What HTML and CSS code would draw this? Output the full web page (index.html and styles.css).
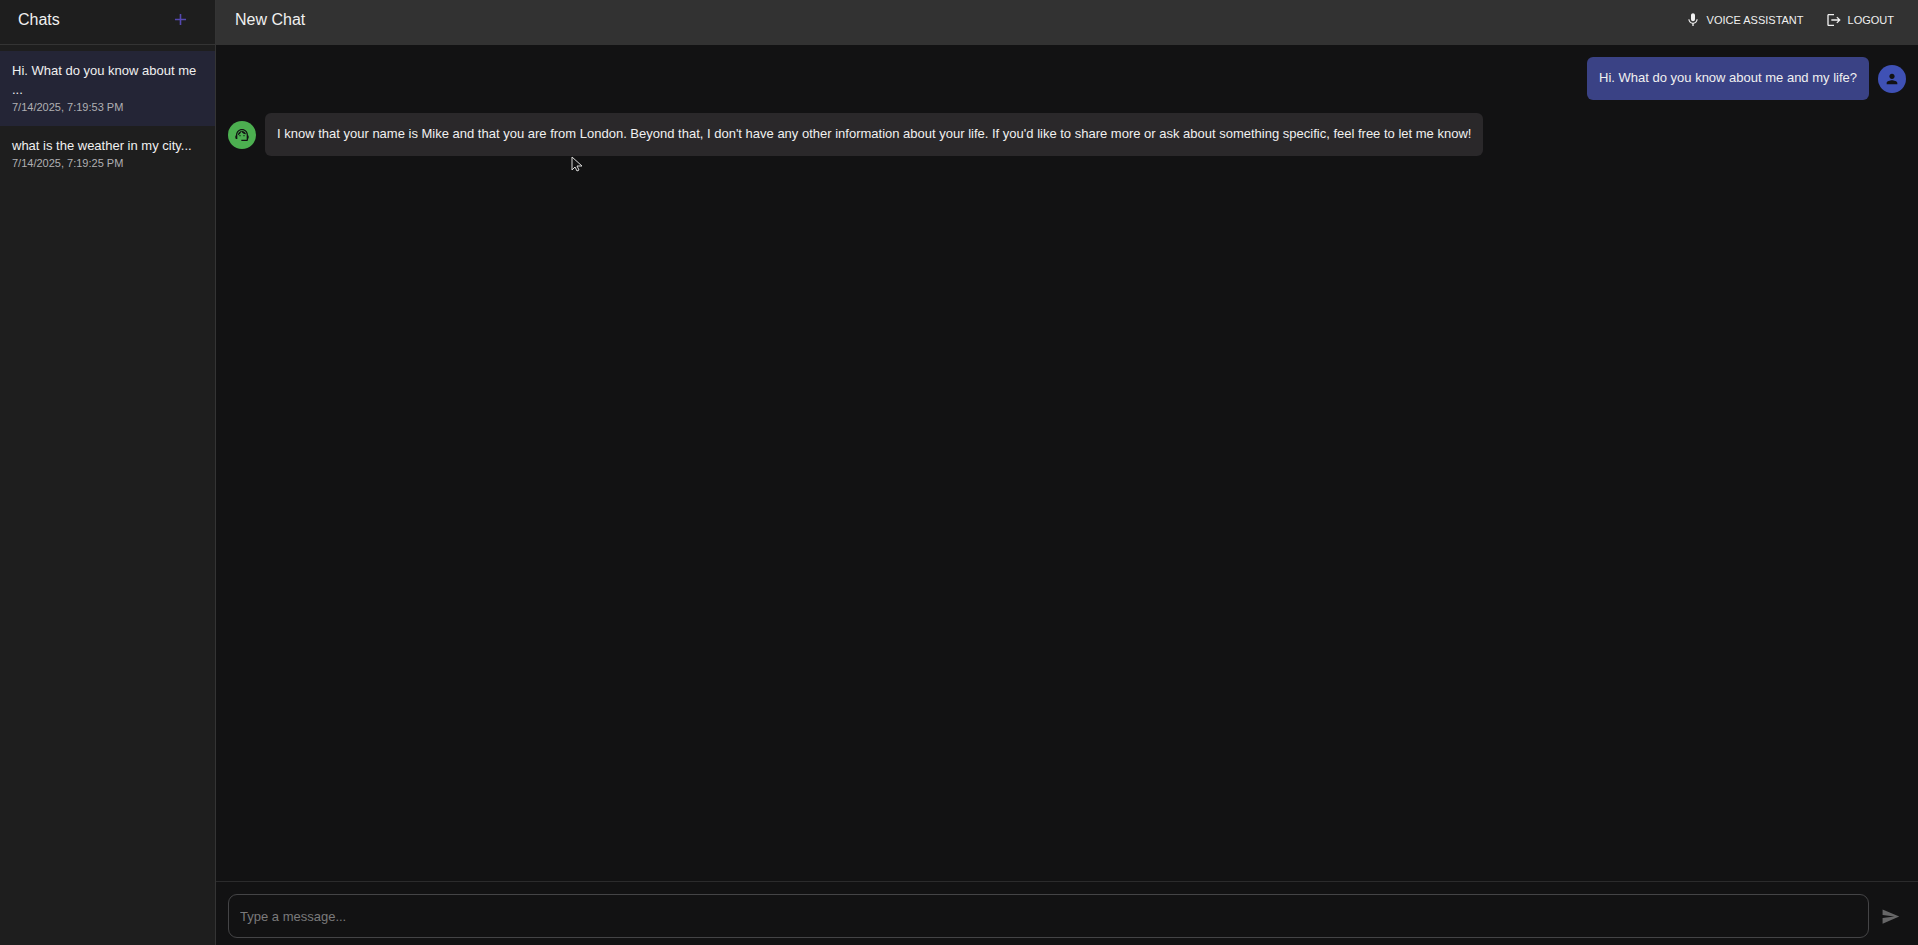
FILE: index.html
```html
<!DOCTYPE html>
<html lang="en">
    <head>
        <meta charset="utf-8" />
        <meta name="viewport" content="width=device-width, initial-scale=1">
        <title>New Chat</title>
        <link rel="stylesheet" href="styles.css">
    </head>
    <body>
        <div class="app">
            <aside class="sidebar">
                <div class="sidebar-header">
                    <h2>Chats</h2>
                    <button type="button" class="add-btn" aria-label="New chat">
                        <svg class="icon-lg" viewBox="0 0 24 24"><path d="M19 13h-6v6h-2v-6H5v-2h6V5h2v6h6z"/></svg>
                    </button>
                </div>
                <ul class="chat-list">
                    <li>
                        <a href="#" class="chat-item active">
                            <span class="chat-title">Hi. What do you know about me ...</span>
                            <span class="chat-date">7/14/2025, 7:19:53 PM</span>
                        </a>
                    </li>
                    <li>
                        <a href="#" class="chat-item">
                            <span class="chat-title">what is the weather in my city...</span>
                            <span class="chat-date">7/14/2025, 7:19:25 PM</span>
                        </a>
                    </li>
                </ul>
            </aside>
            <main class="main">
                <header class="topbar">
                    <h1>New Chat</h1>
                    <button type="button" class="top-btn">
                        <svg class="icon" viewBox="0 0 24 24"><path d="M12 14c1.66 0 2.99-1.34 2.99-3L15 5c0-1.66-1.34-3-3-3S9 3.34 9 5v6c0 1.66 1.34 3 3 3zm5.3-3c0 3-2.54 5.1-5.3 5.1S6.7 14 6.7 11H5c0 3.41 2.72 6.23 6 6.72V21h2v-3.28c3.28-.48 6-3.3 6-6.72z"/></svg>
                        Voice Assistant
                    </button>
                    <button type="button" class="top-btn">
                        <svg class="icon" viewBox="0 0 24 24"><path d="m17 7-1.41 1.41L18.17 11H8v2h10.17l-2.58 2.58L17 17l5-5zM4 5h8V3H4c-1.1 0-2 .9-2 2v14c0 1.1.9 2 2 2h8v-2H4z"/></svg>
                        Logout
                    </button>
                </header>
                <div class="messages">
                    <div class="message user">
                        <div class="bubble">Hi. What do you know about me and my life?</div>
                        <div class="avatar">
                            <svg class="icon" viewBox="0 0 24 24"><path d="M12 12c2.21 0 4-1.79 4-4s-1.79-4-4-4-4 1.79-4 4 1.79 4 4 4m0 2c-2.67 0-8 1.34-8 4v2h16v-2c0-2.66-5.33-4-8-4"/></svg>
                        </div>
                    </div>
                    <div class="message bot">
                        <div class="avatar">
                            <svg class="icon" viewBox="0 0 24 24"><path d="M21 12.22C21 6.73 16.74 3 12 3c-4.69 0-9 3.65-9 9.28-.6.34-1 .98-1 1.72v2c0 1.1.9 2 2 2h1v-6.1c0-3.87 3.13-7 7-7s7 3.13 7 7V19h-8v2h8c1.1 0 2-.9 2-2v-1.22c.59-.31 1-.92 1-1.64v-2.3c0-.7-.41-1.31-1-1.62"/><circle cx="9" cy="13" r="1"/><circle cx="15" cy="13" r="1"/><path d="M18 11.03C17.52 8.18 15.04 6 12.05 6c-3.03 0-6.29 2.51-6.03 6.45 2.47-1.01 4.33-3.21 4.86-5.89 1.31 2.63 4 4.44 7.12 4.47"/></svg>
                        </div>
                        <div class="bubble">I know that your name is Mike and that you are from London. Beyond that, I don't have any other information about your life. If you'd like to share more or ask about something specific, feel free to let me know!</div>
                    </div>
                </div>
                <form class="composer">
                    <input type="text" class="message-input" placeholder="Type a message..." aria-label="Message">
                    <button type="submit" class="send-btn" aria-label="Send" disabled>
                        <svg class="icon-lg" viewBox="0 0 24 24"><path d="M2.01 21 23 12 2.01 3 2 10l15 2-15 2z"/></svg>
                    </button>
                </form>
            </main>
        </div>
        <!-- mouse pointer -->
        <svg class="cursor" viewBox="0 0 12 17"><path d="M1 1v13l3-3 2 4 2-1-2-4h5z"/></svg>
    </body>
</html>
```
FILE: styles.css
```css
* {
    box-sizing: border-box;
}
body {
    margin: 0;
    background-color: #121213;
    color: #f0f0f0;
    font-family: "Liberation Sans", Arial, sans-serif;
    font-size: 13px;
    line-height: 19px;
}
h1, h2 {
    margin: 0;
    font-size: 16px;
    font-weight: normal;
}
button {
    display: flex;
    align-items: center;
    padding: 0;
    border: none;
    background: none;
    font-family: inherit;
}
svg {
    display: block;
    fill: currentColor;
}
.icon {
    width: 16px;
    height: 16px;
}
.icon-lg {
    width: 19px;
    height: 19px;
}
.app {
    display: flex;
    height: 100vh;
}

/* sidebar */
.sidebar {
    flex: none;
    width: 216px;
    background-color: #1e1e1e;
    border-right: 1px solid #343434;
}
.sidebar-header {
    display: flex;
    align-items: center;
    justify-content: space-between;
    height: 45px;
    padding: 0 25px 6px 18px;
    border-bottom: 1px solid #343434;
}
.add-btn {
    color: #5548b0;
}
.chat-list {
    margin: 0;
    padding: 6px 0;
    list-style: none;
}
.chat-item {
    display: block;
    padding: 10px 12px;
    color: inherit;
    text-decoration: none;
}
.chat-item.active {
    background-color: #242536;
}
.chat-title {
    display: block;
}
.chat-date {
    display: block;
    color: #b0b0b3;
    font-size: 11px;
    line-height: 17px;
}

/* main column */
.main {
    display: flex;
    flex: 1;
    flex-direction: column;
    min-width: 0;
}
.topbar {
    display: flex;
    align-items: center;
    height: 45px;
    padding: 0 24px 6px 19px;
    background-color: #323232;
}
.topbar h1 {
    flex: 1;
}
.top-btn {
    gap: 6px;
    margin-left: 22px;
    color: #f0f0f0;
    font-size: 11px;
    text-transform: uppercase;
}
.messages {
    flex: 1;
    padding: 12px;
    overflow: auto;
}
.message {
    display: flex;
    align-items: center;
    gap: 9px;
    margin-bottom: 13px;
}
.message.user {
    justify-content: flex-end;
}
.bubble {
    padding: 11px 12px 13px;
    border-radius: 6px;
    background-color: #2a282a;
}
.user .bubble {
    background-color: #3a4285;
}
.avatar {
    display: flex;
    flex: none;
    align-items: center;
    justify-content: center;
    width: 28px;
    height: 28px;
    border-radius: 50%;
    background-color: #4caf50;
    color: #121213;
}
.user .avatar {
    background-color: #3f51b5;
}
.composer {
    display: flex;
    align-items: center;
    gap: 12px;
    padding: 12px 18px 7px 12px;
    border-top: 1px solid #2b2b2c;
}
.message-input {
    flex: 1;
    height: 44px;
    padding: 0 11px;
    border: 1px solid #444446;
    border-radius: 9px;
    outline: none;
    background: none;
    color: #f0f0f0;
    font-family: inherit;
    font-size: 13px;
}
.message-input::placeholder {
    color: #7a7a7b;
    opacity: 1;
}
.send-btn {
    color: #666667;
}

.cursor {
    position: absolute;
    top: 156px;
    left: 571px;
    width: 12px;
    height: 17px;
    fill: #121213;
    stroke: #d8d8d8;
}
```
